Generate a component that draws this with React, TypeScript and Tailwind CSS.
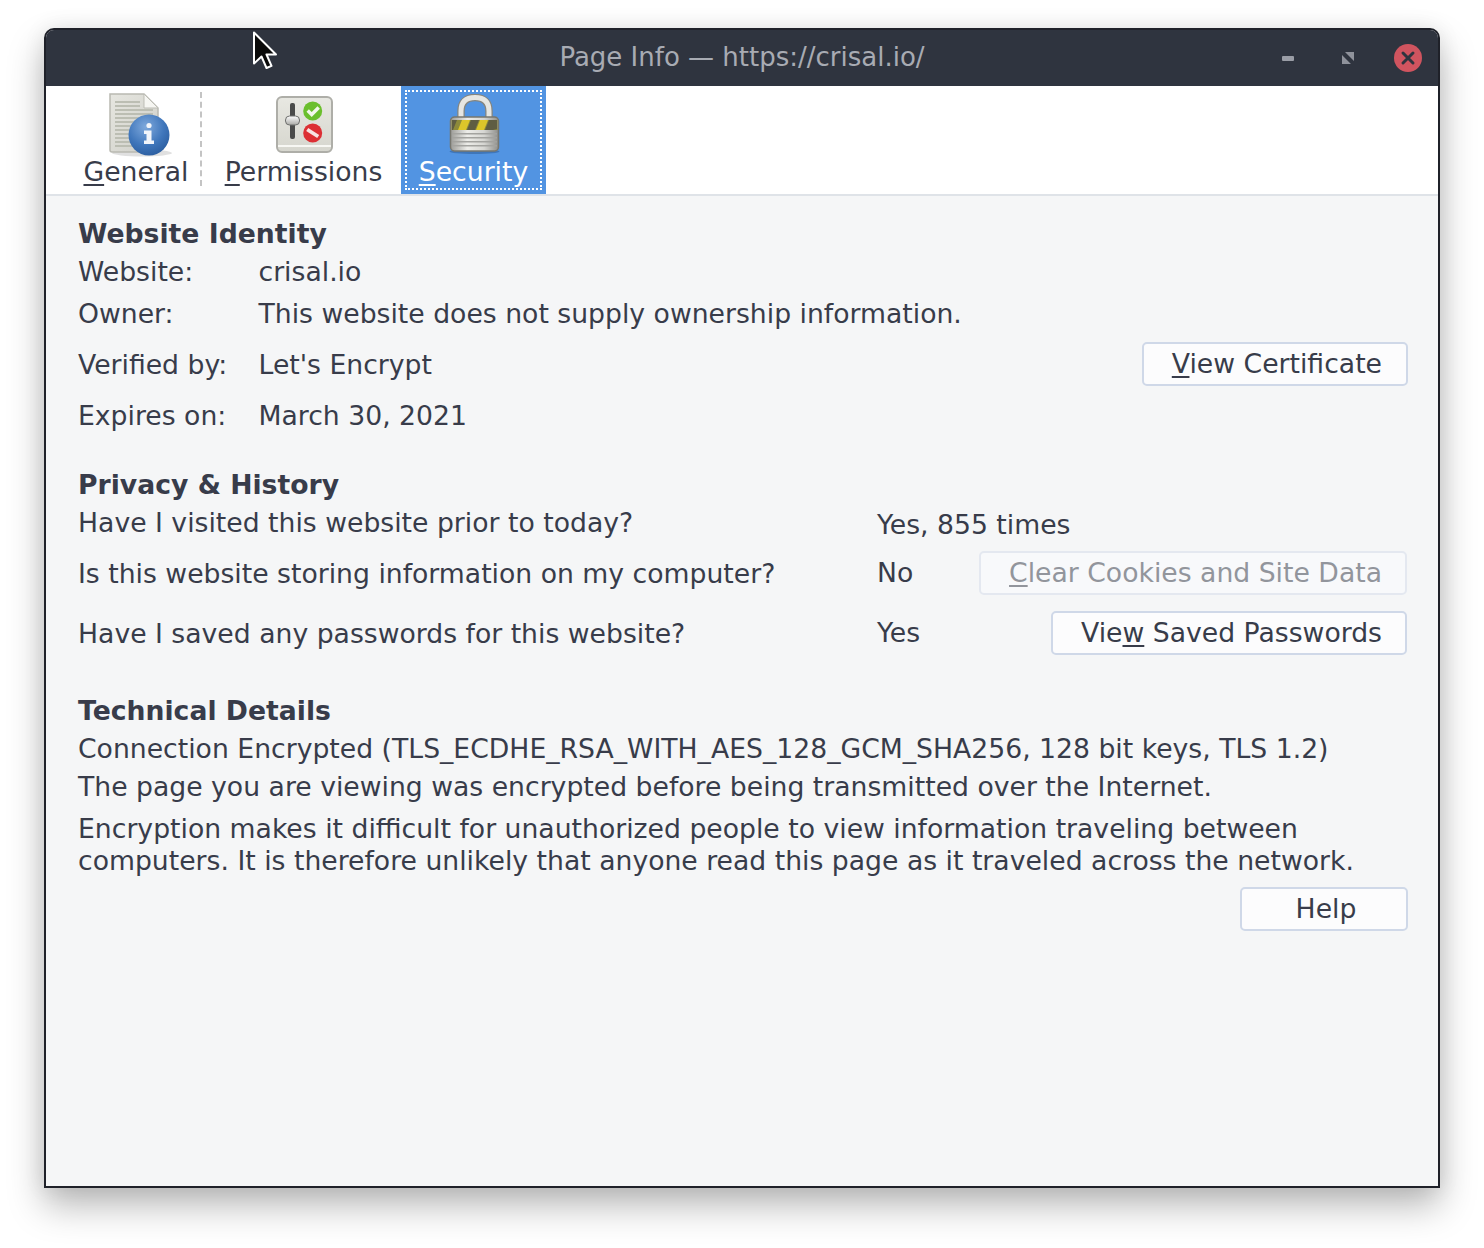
const Mnemonic = ({ pre = '', ch, post }: { pre?: string; ch: string; post: string }) => (
  <span>
    {pre}
    <span className="underline decoration-2 underline-offset-[3px] [text-decoration-skip-ink:none]">{ch}</span>
    {post}
  </span>
);

const Btn = ({ w, disabled, children }: { w: string; disabled?: boolean; children: React.ReactNode }) => (
  <button
    type="button"
    className={`${w} flex h-11 shrink-0 items-center justify-end rounded-[5px] border-2 ${
      disabled ? 'border-[#e4e8f0] bg-[#f8f9fb] text-[#92959c]' : 'border-[#cfd8e8] bg-[#fcfcfd] text-[#383c4a]'
    }`}
  >
    {children}
  </button>
);

const Row = ({ label, children, className }: { label: string; children?: React.ReactNode; className: string }) => (
  <div className={`flex items-center ${className}`}>
    <span className="w-[180.5px] shrink-0">{label}</span>
    {children}
  </div>
);

const GeneralIcon = () => (
  <svg width="68" height="68" viewBox="0 0 68 68" className="blur-[0.5px]">
    <defs>
      <linearGradient id="pg" x1="0" y1="0" x2="1" y2="1">
        <stop offset="0" stopColor="#e6e6e0" />
        <stop offset="1" stopColor="#cfcfc8" />
      </linearGradient>
      <radialGradient id="ball" cx="0.42" cy="0.3" r="0.75">
        <stop offset="0" stopColor="#7fa9dc" />
        <stop offset="0.6" stopColor="#3f76bb" />
        <stop offset="1" stopColor="#2a5c9e" />
      </radialGradient>
    </defs>
    <ellipse cx="38" cy="63" rx="30" ry="3.5" fill="#000" opacity="0.12" />
    <path d="M6 4h34l14 14v42q0 2-2 2H8q-2 0-2-2z" fill="url(#pg)" stroke="#b9b9b1" strokeWidth="1.5" />
    <path d="M40 4v14h14z" fill="#f6f6f2" stroke="#bdbdb5" />
    {[11, 15, 19, 23, 27, 31, 35, 39, 43, 47, 51, 55].map(y => (
      <rect key={y} x="11" y={y} width={y < 17 ? 25 : 38} height="2" fill="#bcbeb3" />
    ))}
    <circle cx="45" cy="45" r="20.5" fill="url(#ball)" />
    <circle cx="45" cy="35.5" r="2.6" fill="#f2f5fa" />
    <path d="M40 40.5h7.5v10h2.5v3.5H40v-3.5h2.5v-6.5H40z" fill="#f2f5fa" />
  </svg>
);

const PermissionsIcon = () => (
  <svg width="60" height="60" viewBox="0 0 60 60" className="blur-[0.5px]">
    <defs>
      <linearGradient id="pb" x1="0" y1="0" x2="0" y2="1">
        <stop offset="0" stopColor="#e8e8e2" />
        <stop offset="1" stopColor="#d6d6ce" />
      </linearGradient>
      <linearGradient id="knob" x1="0" y1="0" x2="0" y2="1">
        <stop offset="0" stopColor="#fff" />
        <stop offset="1" stopColor="#a9a9a5" />
      </linearGradient>
    </defs>
    <rect x="2" y="2" width="55" height="55" rx="5" fill="url(#pb)" stroke="#aeaea8" strokeWidth="2" />
    <rect x="3" y="50" width="53" height="2" fill="#f7f7f3" />
    <rect x="15" y="8" width="5" height="36" rx="2" fill="#4a4b4a" />
    <rect x="10.5" y="21" width="14" height="9" rx="4" fill="url(#knob)" stroke="#6f706e" />
    <circle cx="37.7" cy="16" r="9.5" fill="#6bbf2d" />
    <path d="M32.7 15.5l4 4 7-7" fill="none" stroke="#f4f8ec" strokeWidth="3.4" />
    <circle cx="37.7" cy="38" r="9.5" fill="#dc2f34" />
    <path d="M32.2 34.5l11 7" stroke="#f8e3e3" strokeWidth="3.8" />
  </svg>
);

const SecurityIcon = () => (
  <svg width="56" height="60" viewBox="0 0 56 60" className="blur-[0.6px]">
    <defs>
      <linearGradient id="sh" x1="0" y1="0" x2="1" y2="0">
        <stop offset="0" stopColor="#9c9c98" />
        <stop offset="0.35" stopColor="#ececE8" />
        <stop offset="0.7" stopColor="#d6d6d2" />
        <stop offset="1" stopColor="#8e8e8a" />
      </linearGradient>
    </defs>
    <ellipse cx="28.5" cy="57.5" rx="25" ry="2.5" fill="#1d3f6d" opacity="0.35" />
    <path d="M15 26V17C15 8 20 3.5 29 3.5s14 4.5 14 13.5v9" fill="none" stroke="#85857f" strokeWidth="7.5" />
    <path d="M15 26V17C15 8 20 3.5 29 3.5s14 4.5 14 13.5v9" fill="none" stroke="#e6e6e2" strokeWidth="5" />
    <rect x="4.5" y="23" width="48" height="34" rx="4" fill="url(#sh)" stroke="#77776f" strokeWidth="1.5" />
    <rect x="5.5" y="26" width="46" height="10" fill="#8d8a3a" />
    <path d="M16 26h8l-4 10h-8zM34 26h8l-4 10h-8z" fill="#dcc62a" />
    <path d="M6 26h5l-4 10H6zM25 26h8l-4 10h-8zM43 26h8v9l-4 1h-8z" fill="#5f5d42" />
    {[39, 43, 47, 51].map(y => (
      <rect key={y} x="6" y={y} width="45" height="1.5" fill="#a3a39f" />
    ))}
  </svg>
);

export default function App() {
  return (
    <div className="relative h-[1248px] w-[1484px] bg-white pt-[28px] pl-[44px] font-['DejaVu_Sans',sans-serif] text-[26.67px] leading-8 text-[#383c4a]">
      <div className="flex h-[1160px] w-[1396px] flex-col overflow-hidden rounded-t-[10px] border-2 border-[#1f2129] bg-[#f5f6f7] shadow-[0_18px_36px_rgba(0,0,0,0.28),0_0_22px_rgba(0,0,0,0.08)]">
        {/* title bar */}
        <div className="relative flex h-[56px] shrink-0 items-center justify-center bg-[#2f343f] pb-[2px] text-[26px] text-[#a8abb3]">
          <span>Page Info — https://crisal.io/</span>
          <span className="absolute top-[26px] left-[1236px] h-[5px] w-3 rounded-[1px] bg-[#9a9da6]" />
          <svg width="12" height="12" viewBox="0 0 12 12" className="absolute top-[22px] left-[1296px]">
            <path d="M3 0h9v9zM0 3l9 9H0z" fill="#8f929b" />
          </svg>
          <svg width="28" height="28" viewBox="0 0 28 28" className="absolute top-[14px] left-[1348px]">
            <circle cx="14" cy="14" r="14" fill="#d0545f" />
            <path d="M9 9l10 10M19 9L9 19" stroke="#2f343f" strokeWidth="3" strokeLinecap="round" />
          </svg>
        </div>

        {/* toolbar */}
        <div className="flex h-[110px] shrink-0 border-b-2 border-[#dfe3e8] bg-white">
          <div className="mt-[6px] ml-[26px] flex h-[94px] w-[130px] flex-col items-center border-r-2 border-dashed border-[#c4c4c4]">
            <div className="-mt-[2px] ml-[4px] h-[66px]">
              <GeneralIcon />
            </div>
            <span className="whitespace-nowrap">
              <Mnemonic ch="G" post="eneral" />
            </span>
          </div>
          <div className="mt-[6px] flex h-[94px] w-[199px] flex-col items-center">
            <div className="mt-[2px] ml-[6px] h-[62px] shrink-0 pt-px">
              <PermissionsIcon />
            </div>
            <span className="ml-[4px] whitespace-nowrap">
              <Mnemonic ch="P" post="ermissions" />
            </span>
          </div>
          <div className="flex h-[108px] w-[145px] flex-col items-center bg-[#5294e2] p-[4px] text-white">
            <div className="flex h-full w-full flex-col items-center border-2 border-dotted border-white">
              <div className="mt-[2px] h-[63px]">
                <SecurityIcon />
              </div>
              <span className="whitespace-nowrap">
                <Mnemonic ch="S" post="ecurity" />
              </span>
            </div>
          </div>
        </div>

        {/* content */}
        <div className="flex flex-col pt-[22px] pr-[30px] pl-[32px]">
          <h2 className="font-bold">Website Identity</h2>
          <Row label="Website:" className="mt-[6px]">
            <span>crisal.io</span>
          </Row>
          <Row label="Owner:" className="mt-[10px]">
            <span>This website does not supply ownership information.</span>
          </Row>
          <Row label="Verified by:" className="mt-[14px] h-11 justify-between pb-[2px]">
            <span className="flex-1">Let's Encrypt</span>
            <div className="-mt-[2px]">
              <Btn w="w-[266px] pr-[24px]">
                <Mnemonic ch="V" post="iew Certificate" />
              </Btn>
            </div>
          </Row>
          <Row label="Expires on:" className="mt-[12px]">
            <span>March 30, 2021</span>
          </Row>

          <h2 className="mt-[37px] font-bold">Privacy &amp; History</h2>
          <div className="mt-[6px] flex h-8 items-center">
            <span className="w-[799px] shrink-0">Have I visited this website prior to today?</span>
            <span className="mt-[3px]">Yes, 855 times</span>
          </div>
          <div className="mt-[14px] flex h-11 items-center pb-[2px]">
            <span className="w-[799px] shrink-0">Is this website storing information on my computer?</span>
            <span className="-mt-[2px]">No</span>
            <div className="-mt-[2px] mr-px ml-auto">
              <Btn w="w-[428px] pr-[23px]" disabled>
                <Mnemonic ch="C" post="lear Cookies and Site Data" />
              </Btn>
            </div>
          </div>
          <div className="mt-[16px] flex h-11 items-center pb-[2px]">
            <span className="w-[799px] shrink-0">Have I saved any passwords for this website?</span>
            <span className="-mt-[2px]">Yes</span>
            <div className="-mt-[2px] mr-px ml-auto">
              <Btn w="w-[356px] pr-[23px]">
                <Mnemonic pre="Vie" ch="w" post=" Saved Passwords" />
              </Btn>
            </div>
          </div>

          <h2 className="mt-[38px] font-bold">Technical Details</h2>
          <p className="mt-[6px] whitespace-nowrap">Connection Encrypted (TLS_ECDHE_RSA_WITH_AES_128_GCM_SHA256, 128 bit keys, TLS 1.2)</p>
          <p className="mt-[6px] whitespace-nowrap">The page you are viewing was encrypted before being transmitted over the Internet.</p>
          <p className="mt-[10px] whitespace-nowrap">Encryption makes it difficult for unauthorized people to view information traveling between</p>
          <p className="whitespace-nowrap">computers. It is therefore unlikely that anyone read this page as it traveled across the network.</p>
          <div className="mt-[10px] flex justify-end">
            <Btn w="w-[168px] pl-[4px] !justify-center">Help</Btn>
          </div>
        </div>
      </div>

      {/* mouse pointer */}
      <svg width="26" height="40" viewBox="0 0 26 40" className="absolute top-[31px] left-[252px]">
        <path d="M2 1.5v31l7.5-7 5 11.5 5-2.2-5-11.3h9.5z" fill="#0a0a0a" stroke="#fff" strokeWidth="2" strokeLinejoin="round" />
      </svg>
    </div>
  );
}
